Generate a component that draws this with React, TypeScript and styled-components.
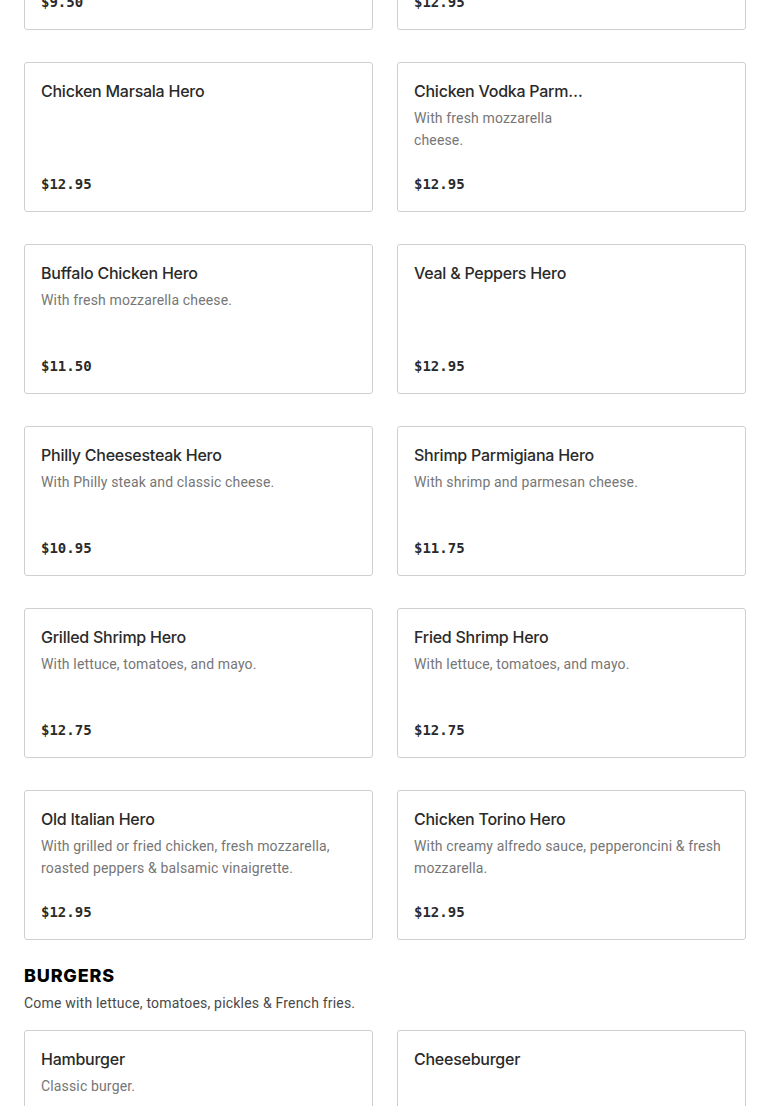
import React from "react";
import styled, { createGlobalStyle } from "styled-components";

const Global = createGlobalStyle`
  html, body { margin: 0; padding: 0; background: #fff; }
  body { font-family: Roboto, "Noto Sans", Arial, sans-serif; -webkit-font-smoothing: antialiased; }
`;

const Page = styled.div`
  padding: 0 24px;
  margin-top: -120px;
`;

const Section = styled.section`
  display: flex;
  flex-direction: column;
  margin-bottom: 25px;
`;

const SectionTitle = styled.h2`
  margin: 0;
  font-family: Inter, Arial, sans-serif;
  font-weight: 800;
  font-size: 18px;
  line-height: 22px;
  color: #000;
  letter-spacing: 0.8px;
`;

const SectionDesc = styled.p`
  margin: 5px 0 16px;
  font-family: Roboto, Arial, sans-serif;
  font-size: 14px;
  line-height: 22px;
  letter-spacing: 0.2px;
  color: #494949;
`;

const Grid = styled.div`
  display: grid;
  grid-template-columns: 1fr 1fr;
  column-gap: 24px;
  row-gap: 32px;
`;

const Card = styled.div`
  box-sizing: border-box;
  min-height: 150px;
  border: 1px solid #cfcfcf;
  border-radius: 3px;
  padding: 16px 16px 15px;
  display: flex;
  flex-direction: column;
  background: #fff;
`;

const Body = styled.div<{ $narrow?: boolean }>`
  display: flex;
  flex-direction: column;
  max-width: ${(p) => (p.$narrow ? "172px" : "none")};
`;

const Title = styled.div`
  font-family: Inter, Arial, sans-serif;
  font-size: 16px;
  line-height: 24px;
  font-weight: 500;
  letter-spacing: -0.25px;
  color: #2a2a2a;
  white-space: nowrap;
  overflow: hidden;
  text-overflow: ellipsis;
`;

const Desc = styled.div`
  margin-top: 4px;
  font-family: Roboto, Arial, sans-serif;
  font-size: 14px;
  line-height: 22px;
  letter-spacing: 0.15px;
  color: #767676;
`;

const Price = styled.div`
  margin-top: auto;
  padding-top: 16px;
  font-family: "DejaVu Sans Mono", "Liberation Mono", monospace;
  font-weight: 700;
  font-size: 14px;
  line-height: 24px;
  color: #2a2a2a;
`;

type Item = { name: string; desc?: string; price?: string; narrow?: boolean };

const heroes: Item[] = [
  { name: "Chicken Parmigiana Hero", price: "$9.50" },
  { name: "Eggplant Parmigiana Hero", price: "$12.95" },
  { name: "Chicken Marsala Hero", price: "$12.95" },
  { name: "Chicken Vodka Parmigiana Hero", desc: "With fresh mozzarella cheese.", price: "$12.95", narrow: true },
  { name: "Buffalo Chicken Hero", desc: "With fresh mozzarella cheese.", price: "$11.50" },
  { name: "Veal & Peppers Hero", price: "$12.95" },
  { name: "Philly Cheesesteak Hero", desc: "With Philly steak and classic cheese.", price: "$10.95" },
  { name: "Shrimp Parmigiana Hero", desc: "With shrimp and parmesan cheese.", price: "$11.75" },
  { name: "Grilled Shrimp Hero", desc: "With lettuce, tomatoes, and mayo.", price: "$12.75" },
  { name: "Fried Shrimp Hero", desc: "With lettuce, tomatoes, and mayo.", price: "$12.75" },
  { name: "Old Italian Hero", desc: "With grilled or fried chicken, fresh mozzarella, roasted peppers & balsamic vinaigrette.", price: "$12.95" },
  { name: "Chicken Torino Hero", desc: "With creamy alfredo sauce, pepperoncini & fresh mozzarella.", price: "$12.95" },
];

const burgers: Item[] = [
  { name: "Hamburger", desc: "Classic burger.", price: "$8.95" },
  { name: "Cheeseburger", price: "$9.50" },
];

function MenuCard({ item }: { item: Item }) {
  return (
    <Card>
      <Body $narrow={item.narrow}>
        <Title>{item.name}</Title>
        {item.desc && <Desc>{item.desc}</Desc>}
      </Body>
      {item.price && <Price>{item.price}</Price>}
    </Card>
  );
}

export default function App() {
  return (
    <>
      <Global />
      <Page>
        <Section>
          <Grid>
            {heroes.map((it) => (
              <MenuCard key={it.name} item={it} />
            ))}
          </Grid>
        </Section>
        <Section>
          <SectionTitle>BURGERS</SectionTitle>
          <SectionDesc>Come with lettuce, tomatoes, pickles &amp; French fries.</SectionDesc>
          <Grid>
            {burgers.map((it) => (
              <MenuCard key={it.name} item={it} />
            ))}
          </Grid>
        </Section>
      </Page>
    </>
  );
}
